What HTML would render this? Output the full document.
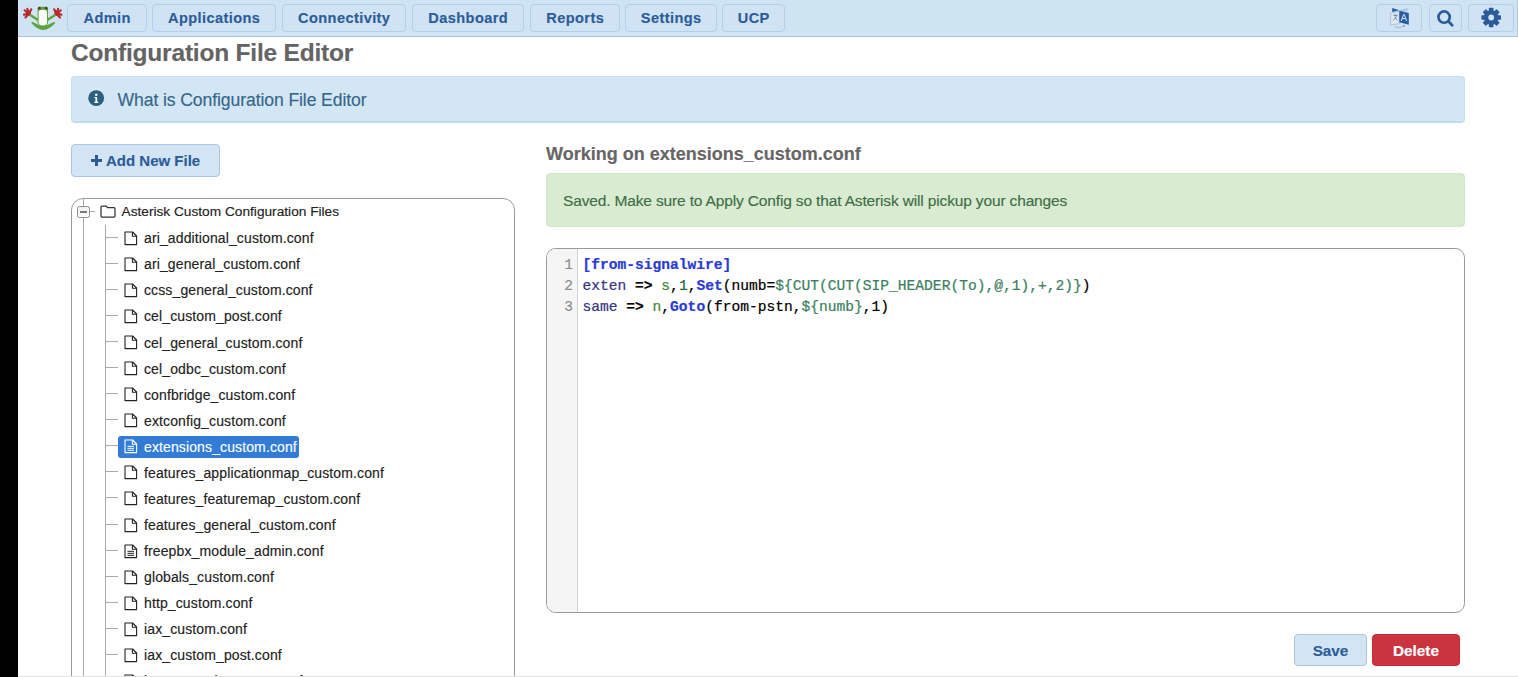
<!DOCTYPE html>
<html><head><meta charset="utf-8">
<style>
*{box-sizing:border-box;margin:0;padding:0}
html,body{width:1518px;height:677px;overflow:hidden;background:#fff;font-family:"Liberation Sans",sans-serif;position:relative;-webkit-text-stroke:0.15px currentColor}
.a{position:absolute}
#blk{left:0;top:0;width:18px;height:677px;background:#000}
#hdr{left:18px;top:0;width:1500px;height:37px;background:#cfe4f3;border-bottom:1px solid #a6c0d6;border-right:1px solid #b0cce0}
.nb{position:absolute;top:4px;height:28px;border:1px solid #b4cfe8;border-radius:4px;background:#cfe3f5;color:#2c5c98;font-weight:bold;font-size:14.6px;line-height:27.5px;text-align:center;letter-spacing:0.4px;text-indent:0.4px}
.ib{position:absolute;top:4px;height:28px;border:1px solid #b4cfe8;border-radius:4px;background:#cfe3f5}
#title{left:71px;top:41px;font-size:24.5px;line-height:24px;font-weight:bold;color:#646464;white-space:nowrap;letter-spacing:-0.2px}
#info{left:71px;top:76px;width:1394px;height:47px;background:#d2e7f3;border:1px solid #c3e1ef;border-bottom:2px solid #bfdcec;border-radius:4px}
#infotxt{left:117.5px;top:90px;font-size:17.6px;line-height:20px;color:#35668a;white-space:nowrap;letter-spacing:-0.1px}
#addbtn{left:71px;top:144px;width:149px;height:33px;background:#d3e5f5;border:1px solid #a9c6e3;border-radius:4px}
#tree{left:71px;top:198px;width:444px;height:520px;border:1px solid #9a9a9a;border-radius:12px}
.tl{position:absolute;background:#ababab}
.it{position:absolute;left:144px;font-size:14px;line-height:18px;color:#222;white-space:nowrap;letter-spacing:0.12px}
#working{left:546px;top:145px;font-size:18px;line-height:18px;font-weight:bold;color:#666;white-space:nowrap}
#ok{left:546px;top:173px;width:919px;height:54px;background:#d9ebd0;border:1px solid #d3e7c6;border-radius:4px}
#oktxt{left:563px;top:192px;font-size:15.5px;line-height:18px;color:#3d6e45;white-space:nowrap;letter-spacing:-0.15px}
#ed{left:546px;top:248px;width:919px;height:365px;border:1px solid #9a9a9a;border-radius:9.5px;overflow:hidden;background:#fff}
#gut{left:0;top:0;width:31px;height:100%;background:#f5f5f5;border-right:1px solid #d3d3d3}
.ln{position:absolute;left:0;width:26px;text-align:right;font-family:"Liberation Mono",monospace;font-size:14.5px;color:#8c8c8c;line-height:21px}
.cl{position:absolute;left:35.5px;-webkit-text-stroke:0.22px currentColor;font-family:"Liberation Mono",monospace;font-size:14.6px;line-height:21px;white-space:pre;color:#000}
#save{left:1294px;top:634px;width:73px;height:32px;background:#d3e5f5;border:1px solid #a9c6e3;border-radius:4px;color:#2c5c98;font-weight:bold;font-size:15.3px;line-height:31.5px;text-align:center}
#del{left:1372px;top:634px;width:88px;height:32px;background:#c9343f;border:1px solid #c12e39;border-radius:4px;color:#fff;font-weight:bold;font-size:15.3px;line-height:31.5px;text-align:center}
#bot{left:18px;top:676px;width:1500px;height:1px;background:#e3e3e3}

.tk{position:absolute;left:106px;width:12px;height:1px;background:#aaa}
.fi{position:absolute;left:123.5px;color:#222;overflow:visible}
.sel{position:absolute;left:118px;width:181px;height:22px;background:#327cd6;border-radius:3px}
.it.w{color:#fff}

.hd{color:#2a3ad6;font-weight:bold}
.at{color:#35357f}
.op{font-weight:bold;color:#000}
.v3{color:#3f8a35}
.nm{color:#1d6344}
.kw{color:#2a3ad6;font-weight:bold}
.v2{color:#3b7f60}
</style></head><body>
<svg width="0" height="0" style="position:absolute"><defs>
<g id="f" fill="none" stroke="currentColor" stroke-width="1.1" stroke-linejoin="round"><path d="M1,1 H8.6 L12.6,5 V13.6 H1 Z"/><path d="M8.4,1 V5.2 H12.6"/></g>
<g id="fl" fill="none" stroke="currentColor" stroke-width="1.1" stroke-linejoin="round"><path d="M1,1 H8.6 L12.6,5 V13.6 H1 Z"/><path d="M8.4,1 V5.2 H12.6"/><path d="M3.5,7.3 H10 M3.5,9.3 H10 M3.5,11.3 H10" stroke-width="1"/></g>
</defs></svg>
<div class="a" id="blk"></div>
<div class="a" id="hdr"></div>
<div class="a" style="left:18px;top:33px;width:1499px;height:3px;background:#d0e5f6"></div>
<div class="nb" style="left:67px;width:80px">Admin</div>
<div class="nb" style="left:152px;width:124px">Applications</div>
<div class="nb" style="left:282px;width:124px">Connectivity</div>
<div class="nb" style="left:412px;width:112px">Dashboard</div>
<div class="nb" style="left:530px;width:90px">Reports</div>
<div class="nb" style="left:625px;width:92px">Settings</div>
<div class="nb" style="left:722px;width:63px">UCP</div>
<div class="ib" style="left:1376px;width:46px"></div>
<div class="ib" style="left:1429px;width:33px"></div>
<div class="ib" style="left:1468px;width:46px"></div>

<div class="a" id="title">Configuration File Editor</div>
<div class="a" id="info"></div>
<div class="a" id="infotxt">What is Configuration File Editor</div>
<div class="a" id="addbtn"></div>

<svg class="a" style="left:1385px;top:4px" width="30" height="28" viewBox="0 0 30 28">
 <path d="M5.6,9 L14.3,7.4 V19.6 L5.6,21 Z" fill="#dde9f4" stroke="#9fb9d6" stroke-width="0.8"/>
 <path d="M7.2,3.9 L14.3,6.3 L7.2,7.9 Z" fill="#2a5ca4"/>
 <path d="M14.3,6.3 L22.6,3.9 V6.9 L14.3,8.3 Z" fill="#a9c8e6"/>
 <path d="M14.3,6.8 L23.8,9.1 V20.7 L14.3,18.3 Z" fill="#2a5ca4"/>
 <path d="M8.3,11.4 H12.6 M10.3,10.2 V11.4 M11.8,11.6 Q10.5,14.8 7.9,16.4 M9.5,13.4 L12.6,16.3" fill="none" stroke="#5f7389" stroke-width="0.8"/>
 <path d="M16.2,17 L18.6,10.4 H19.2 L21.6,17 M17,14.6 H20.8" fill="none" stroke="#d5e5f3" stroke-width="1"/>
 <path d="M9.5,22.4 Q14,25.3 19,22.2" fill="none" stroke="#93aac4" stroke-width="0.8"/>
 <path d="M18,21.6 L20,21.3 L19.2,23 Z" fill="#4a6f9f"/>
</svg>
<svg class="a" style="left:1432px;top:4.5px" width="26" height="26" viewBox="0 0 26 26">
 <circle cx="12.1" cy="12.1" r="5.65" fill="none" stroke="#2b5b98" stroke-width="2.7"/>
 <path d="M16.3,16.3 L20.2,20.2" stroke="#2b5b98" stroke-width="2.8" stroke-linecap="round"/>
</svg>
<svg class="a" style="left:1480px;top:6px" width="23" height="23" viewBox="-11.2 -11.5 23 23"><g fill="#2b5b98"><rect x="-2.3" y="-9.8" width="4.6" height="4.5" rx="0.7" transform="rotate(0)"/><rect x="-2.3" y="-9.8" width="4.6" height="4.5" rx="0.7" transform="rotate(45)"/><rect x="-2.3" y="-9.8" width="4.6" height="4.5" rx="0.7" transform="rotate(90)"/><rect x="-2.3" y="-9.8" width="4.6" height="4.5" rx="0.7" transform="rotate(135)"/><rect x="-2.3" y="-9.8" width="4.6" height="4.5" rx="0.7" transform="rotate(180)"/><rect x="-2.3" y="-9.8" width="4.6" height="4.5" rx="0.7" transform="rotate(225)"/><rect x="-2.3" y="-9.8" width="4.6" height="4.5" rx="0.7" transform="rotate(270)"/><rect x="-2.3" y="-9.8" width="4.6" height="4.5" rx="0.7" transform="rotate(315)"/><circle r="7.3"/></g><circle r="2.9" fill="#cfe3f5"/></svg>
<svg class="a" style="left:0;top:0" width="70" height="36" viewBox="0 0 70 36">
 <circle cx="28.3" cy="13.2" r="2.6" fill="#b8292b"/><circle cx="57.1" cy="13.2" r="2.6" fill="#b8292b"/><g stroke="#b8292b" stroke-width="2.1" stroke-linecap="round">
  <path d="M29,14 L24.6,10.3 M29,14 L27.3,8.8 M29,14 L31.2,9.3 M29,14 L24,14.6 M29,14 L25.4,17.6"/>
  <path d="M56.4,14 L60.8,10.3 M56.4,14 L58.1,8.8 M56.4,14 L54.2,9.3 M56.4,14 L61.4,14.6 M56.4,14 L60,17.6"/>
 </g>
 <path d="M31,15.5 L38.5,20.3 M54.4,15.5 L46.9,20.3" stroke="#5ea33f" stroke-width="2.3" stroke-linecap="round"/>
 <path d="M32.3,22.8 Q43,35.5 54.3,22.8 Q43,30 32.3,22.8 Z" fill="#5ea33f" stroke="#5ea33f" stroke-width="1.7" stroke-linejoin="round"/>
 <path d="M37.6,9 Q37.6,6.8 40,6.8 H45.6 Q48,6.8 48,9 V22 Q48,26 42.8,26 Q37.6,26 37.6,22 Z" fill="#5ea33f"/>
 <path d="M38.6,12 Q38.6,9.8 42.8,9.8 Q47,9.8 47,12 V22 Q47,25.5 42.8,25.5 Q38.6,25.5 38.6,22 Z" fill="#fbfdf8"/>
 <circle cx="39.3" cy="8.2" r="1.4" fill="#5e3a1c"/><circle cx="46.2" cy="8.2" r="1.4" fill="#5e3a1c"/>
</svg>
<svg class="a" style="left:88px;top:90px" width="17" height="17" viewBox="0 0 17 17">
 <circle cx="8.2" cy="8.2" r="7.9" fill="#2b5f7f"/>
 <path d="M6.3,7 H9.2 V11.8 H10.3 V12.9 H6.3 V11.8 H7.4 V8.1 H6.3 Z" fill="#fff"/>
 <circle cx="8.3" cy="4.7" r="1.3" fill="#fff"/>
</svg>
<div class="a" style="left:71px;top:144px;width:149px;height:33px;color:#2c5c98;font-weight:bold;font-size:15px;line-height:31px;white-space:nowrap">
<svg class="a" style="left:20px;top:11px" width="11" height="11" viewBox="0 0 11 11"><path d="M4,0 H7 V4 H11 V7 H7 V11 H4 V7 H0 V4 H4 Z" fill="#2c5c98"/></svg>
<span class="a" style="left:35px;top:1px">Add New File</span></div>
<div class="a" id="tree"></div>
<div class="tl" style="left:83px;top:199px;width:1px;height:478px"></div>
<div class="tl" style="left:105px;top:225px;width:1px;height:452px"></div>
<div class="a" style="left:77px;top:205.5px;width:13px;height:12.5px;border:1.3px solid #8f8f8f;border-radius:2.5px;background:linear-gradient(#f0f0f0,#fff)"></div>
<div class="tl" style="left:80px;top:211px;width:7px;height:1.8px;background:#7a7a7a"></div>
<div class="tl" style="left:90px;top:211px;width:5px;height:1px"></div>
<svg class="a" style="left:99.5px;top:205px" width="16" height="13" viewBox="0 0 16 13"><path d="M1,2 Q1,1 2,1 H6 L7.5,2.7 H14 Q15,2.7 15,3.7 V11 Q15,12 14,12 H2 Q1,12 1,11 Z" fill="none" stroke="#333" stroke-width="1.25" stroke-linejoin="round"/></svg>
<div class="it" style="left:121.5px;top:202.8px;font-size:13.7px;letter-spacing:0">Asterisk Custom Configuration Files</div>
<div class="tk" style="top:236.9px"></div>
<svg class="fi" style="top:230.9px" width="14" height="15" viewBox="0 0 14 15"><use href="#f"/></svg>
<div class="it" style="top:229.2px">ari_additional_custom.conf</div>
<div class="tk" style="top:262.9px"></div>
<svg class="fi" style="top:256.9px" width="14" height="15" viewBox="0 0 14 15"><use href="#f"/></svg>
<div class="it" style="top:255.3px">ari_general_custom.conf</div>
<div class="tk" style="top:289.0px"></div>
<svg class="fi" style="top:283.0px" width="14" height="15" viewBox="0 0 14 15"><use href="#f"/></svg>
<div class="it" style="top:281.4px">ccss_general_custom.conf</div>
<div class="tk" style="top:315.1px"></div>
<svg class="fi" style="top:309.1px" width="14" height="15" viewBox="0 0 14 15"><use href="#f"/></svg>
<div class="it" style="top:307.4px">cel_custom_post.conf</div>
<div class="tk" style="top:341.1px"></div>
<svg class="fi" style="top:335.1px" width="14" height="15" viewBox="0 0 14 15"><use href="#f"/></svg>
<div class="it" style="top:333.5px">cel_general_custom.conf</div>
<div class="tk" style="top:367.1px"></div>
<svg class="fi" style="top:361.1px" width="14" height="15" viewBox="0 0 14 15"><use href="#f"/></svg>
<div class="it" style="top:359.5px">cel_odbc_custom.conf</div>
<div class="tk" style="top:393.2px"></div>
<svg class="fi" style="top:387.2px" width="14" height="15" viewBox="0 0 14 15"><use href="#f"/></svg>
<div class="it" style="top:385.6px">confbridge_custom.conf</div>
<div class="tk" style="top:419.2px"></div>
<svg class="fi" style="top:413.2px" width="14" height="15" viewBox="0 0 14 15"><use href="#f"/></svg>
<div class="it" style="top:411.6px">extconfig_custom.conf</div>
<div class="tk" style="top:445.3px"></div>
<div class="sel" style="top:435.8px"></div>
<svg class="fi" style="top:439.3px" width="14" height="15" viewBox="0 0 14 15"><use href="#fl" style="color:#fff"/></svg>
<div class="it w" style="top:437.7px">extensions_custom.conf</div>
<div class="tk" style="top:471.4px"></div>
<svg class="fi" style="top:465.4px" width="14" height="15" viewBox="0 0 14 15"><use href="#f"/></svg>
<div class="it" style="top:463.7px">features_applicationmap_custom.conf</div>
<div class="tk" style="top:497.4px"></div>
<svg class="fi" style="top:491.4px" width="14" height="15" viewBox="0 0 14 15"><use href="#f"/></svg>
<div class="it" style="top:489.8px">features_featuremap_custom.conf</div>
<div class="tk" style="top:523.5px"></div>
<svg class="fi" style="top:517.5px" width="14" height="15" viewBox="0 0 14 15"><use href="#f"/></svg>
<div class="it" style="top:515.8px">features_general_custom.conf</div>
<div class="tk" style="top:549.5px"></div>
<svg class="fi" style="top:543.5px" width="14" height="15" viewBox="0 0 14 15"><use href="#fl"/></svg>
<div class="it" style="top:541.9px">freepbx_module_admin.conf</div>
<div class="tk" style="top:575.6px"></div>
<svg class="fi" style="top:569.6px" width="14" height="15" viewBox="0 0 14 15"><use href="#f"/></svg>
<div class="it" style="top:567.9px">globals_custom.conf</div>
<div class="tk" style="top:601.6px"></div>
<svg class="fi" style="top:595.6px" width="14" height="15" viewBox="0 0 14 15"><use href="#f"/></svg>
<div class="it" style="top:594.0px">http_custom.conf</div>
<div class="tk" style="top:627.6px"></div>
<svg class="fi" style="top:621.6px" width="14" height="15" viewBox="0 0 14 15"><use href="#f"/></svg>
<div class="it" style="top:620.0px">iax_custom.conf</div>
<div class="tk" style="top:653.7px"></div>
<svg class="fi" style="top:647.7px" width="14" height="15" viewBox="0 0 14 15"><use href="#f"/></svg>
<div class="it" style="top:646.1px">iax_custom_post.conf</div>
<div class="tk" style="top:679.8px"></div>
<svg class="fi" style="top:673.8px" width="14" height="15" viewBox="0 0 14 15"><use href="#f"/></svg>
<div class="it" style="top:672.1px">iax_general_custom.conf</div>

<div class="a" id="working">Working on extensions_custom.conf</div>
<div class="a" id="ok"></div>
<div class="a" id="oktxt">Saved. Make sure to Apply Config so that Asterisk will pickup your changes</div>
<div class="a" id="ed"><div class="a" id="gut"></div>
<div class="ln" style="top:5.6px">1</div><div class="ln" style="top:26.6px">2</div><div class="ln" style="top:47.6px">3</div>
<div class="cl" style="top:5.6px"><span class="hd">[from-signalwire]</span></div>
<div class="cl" style="top:26.6px"><span class="at">exten</span> <span class="op">=&gt;</span> <span class="v3">s</span>,<span class="nm">1</span>,<span class="kw">Set</span>(numb=<span class="v2">${CUT(CUT(SIP_HEADER(To),@,1),+,2)}</span>)</div>
<div class="cl" style="top:47.6px"><span class="at">same</span> <span class="op">=&gt;</span> <span class="v3">n</span>,<span class="kw">Goto</span>(from-pstn,<span class="v2">${numb}</span>,1)</div>
</div>
<div class="a" id="save">Save</div>
<div class="a" id="del">Delete</div>
<div class="a" id="bot"></div>
</body></html>
